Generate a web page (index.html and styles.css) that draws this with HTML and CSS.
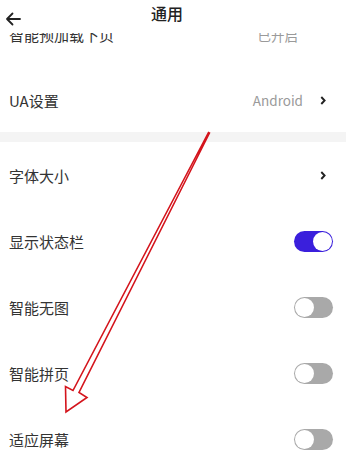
FILE: index.html
```html
<!DOCTYPE html>
<html lang="zh">
<head>
<meta charset="utf-8">
<link rel="stylesheet" href="styles.css">
</head>
<body>
<div class="page">
  <div class="header">
    <div class="back">
      <svg width="16" height="14" viewBox="0 0 16 14"><path d="M15 7H2M7.5 1.5L2 7l5.5 5.5" fill="none" stroke="#222" stroke-width="1.8" stroke-linecap="round" stroke-linejoin="round"/></svg>
    </div>
    <div class="title">通用</div>
    <div class="spacer"></div>
  </div>
  <div class="row row-clipped">
    <span class="label">智能预加载下页</span>
    <span class="value">已开启</span>
  </div>
  <div class="row row-ua">
    <span class="label">UA设置</span>
    <span class="value">Android</span>
    <svg class="chev" width="6" height="9" viewBox="0 0 6 9"><path d="M1.3 1L4.6 4.5 1.3 8" fill="none" stroke="#222" stroke-width="1.9"/></svg>
  </div>
  <div class="sep"></div>
  <div class="row">
    <span class="label">字体大小</span>
    <svg class="chev" width="6" height="9" viewBox="0 0 6 9"><path d="M1.3 1L4.6 4.5 1.3 8" fill="none" stroke="#222" stroke-width="1.9"/></svg>
  </div>
  <div class="row">
    <span class="label">显示状态栏</span>
    <span class="toggle on"><span class="knob"></span></span>
  </div>
  <div class="row">
    <span class="label">智能无图</span>
    <span class="toggle"><span class="knob"></span></span>
  </div>
  <div class="row">
    <span class="label">智能拼页</span>
    <span class="toggle"><span class="knob"></span></span>
  </div>
  <div class="row">
    <span class="label">适应屏幕</span>
    <span class="toggle"><span class="knob"></span></span>
  </div>
  <svg class="annot" width="346" height="454" viewBox="0 0 346 454">
    <polygon points="209.5,133 79,392.5 87,397.5 66,412 65.5,386.5 73,390.5 208.5,132.5" fill="none" stroke="#d4141c" stroke-width="1.6" stroke-linejoin="miter"/>
  </svg>
</div>
</body>
</html>
```
FILE: styles.css
```css
* { box-sizing: border-box; }
html, body { margin: 0; padding: 0; background: #fff; }
body {
  font-family: "Noto Sans CJK SC", "Noto Sans", sans-serif;
  color: #333;
}
.page {
  position: relative;
  width: 346px;
  height: 454px;
  overflow: hidden;
}
.header {
  height: 33px;
  display: flex;
  align-items: flex-start;
  padding-top: 4px;
}
.back {
  width: 30px;
  padding-left: 5px;
  padding-top: 3px;
}
.title {
  flex: 1;
  text-align: center;
  font-size: 16px;
  line-height: 19px;
  font-weight: 500;
  color: #222;
  padding-right: 0px;
}
.spacer { width: 42px; }
.row {
  height: 66px;
  display: flex;
  align-items: center;
  padding: 0 13px 0 9px;
}
.row-clipped {
  height: 35px;
  overflow: hidden;
  align-items: flex-start;
}
.row-clipped .label, .row-clipped .value { margin-top: -8px; line-height: 20px; }
.row-ua { height: 64px; }
.label {
  flex: 1;
  font-size: 15px;
  color: #333;
}
.value {
  font-size: 13.5px;
  color: #9a9a9a;
  margin-right: 17px;
}
.row-clipped .value { margin-right: 35px; }
.chev { margin-right: 7px; }
.sep {
  height: 10px;
  background: #f4f4f4;
}
.toggle {
  width: 39px;
  height: 21px;
  border-radius: 11px;
  background: #a9a9a9;
  display: flex;
  align-items: center;
  padding: 0 1px;
}
.toggle .knob {
  width: 19px;
  height: 19px;
  border-radius: 50%;
  background: #fff;
}
.toggle.on {
  background: #3a1fdc;
  justify-content: flex-end;
}
.annot {
  position: absolute;
  left: 0;
  top: 0;
  pointer-events: none;
}
```
